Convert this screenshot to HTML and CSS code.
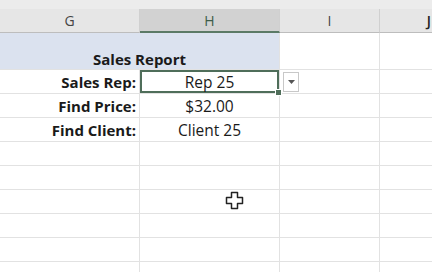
FILE: index.html
```html
<!DOCTYPE html>
<html>
<head>
<meta charset="utf-8">
<link rel="stylesheet" href="styles.css">
</head>
<body>
<div class="sheet">
  <div class="topstrip"></div>
  <div class="grid">
    <div class="hdr">G</div>
    <div class="hdr hdr-sel">H</div>
    <div class="hdr">I</div>
    <div class="hdr hdr-j">J</div>

    <div class="cell title">Sales Report</div>
    <div class="cell tall"></div>
    <div class="cell tall last"></div>

    <div class="cell label">Sales Rep:</div>
    <div class="cell value selected">Rep 25<span class="handle"></span><span class="dd"><svg width="7" height="4" viewBox="0 0 7 4"><path d="M0 0h7L3.5 4z" fill="#555"/></svg></span></div>
    <div class="cell"></div>
    <div class="cell last"></div>

    <div class="cell label">Find Price:</div>
    <div class="cell value">$32.00</div>
    <div class="cell"></div>
    <div class="cell last"></div>

    <div class="cell label">Find Client:</div>
    <div class="cell value">Client 25</div>
    <div class="cell"></div>
    <div class="cell last"></div>

    <div class="cell"></div><div class="cell"></div><div class="cell"></div><div class="cell last"></div>
    <div class="cell"></div><div class="cell"></div><div class="cell"></div><div class="cell last"></div>
    <div class="cell"></div><div class="cell"></div><div class="cell"></div><div class="cell last"></div>
    <div class="cell"></div><div class="cell"></div><div class="cell"></div><div class="cell last"></div>
    <div class="cell"></div><div class="cell"></div><div class="cell"></div><div class="cell last"></div>
    <div class="cell"></div><div class="cell"></div><div class="cell"></div><div class="cell last"></div>
  </div>
  <svg class="cursor" width="20" height="20" viewBox="0 0 20 20">
    <path d="M6.5 1.5h6v5h5v6h-5v5h-6v-5h-5v-6h5z" fill="#fff" stroke="#222" stroke-width="1.5" stroke-linejoin="round"/>
  </svg>
</div>
</body>
</html>
```
FILE: styles.css
```css
html, body {
  margin: 0;
  padding: 0;
  background: #fff;
}
.sheet {
  position: relative;
  width: 432px;
  height: 272px;
  overflow: hidden;
  font-family: "Open Sans", "Noto Sans", sans-serif;
}
.topstrip {
  height: 9px;
  background: #ececec;
}
.grid {
  display: grid;
  grid-template-columns: 140px 140px 100px 52px;
  grid-template-rows: 24px 37px repeat(9, 24px);
}
.hdr {
  box-sizing: border-box;
  background: #e6e6e6;
  border-right: 1px solid #d0d0d0;
  border-bottom: 1px solid #bdbdbd;
  display: flex;
  align-items: center;
  justify-content: center;
  font-size: 14px;
  color: #444;
}
.hdr-sel {
  background: #d2d2d2;
  color: #3d5c49;
  border-bottom: 2px solid #5b7a66;
}
.hdr-j {
  justify-content: flex-end;
  padding-right: 1px;
  border-right: none;
  color: #222;
  font-weight: 600;
}
.cell {
  box-sizing: border-box;
  border-right: 1px solid #e2e2e2;
  border-bottom: 1px solid #e2e2e2;
  display: flex;
  align-items: center;
  font-size: 15px;
  color: #1a1a1a;
  position: relative;
}
.last {
  border-right: none;
}
.title {
  grid-column: span 2;
  background: #dbe2ef;
  justify-content: center;
  align-items: flex-end;
  padding-bottom: 0;
  font-weight: 700;
}
.label {
  justify-content: flex-end;
  padding-right: 3px;
  font-weight: 700;
}
.value {
  justify-content: center;
  font-size: 15.5px;
}
.selected {
  box-shadow: inset 0 0 0 2px #4f6e5a;
}
.handle {
  position: absolute;
  right: -3px;
  bottom: -3px;
  width: 5px;
  height: 5px;
  background: #4f6e5a;
  border: 1px solid #fff;
  z-index: 2;
}
.dd {
  position: absolute;
  left: 143px;
  top: 2px;
  width: 16px;
  height: 20px;
  box-sizing: border-box;
  border: 1px solid #c8c8c8;
  background: #fff;
  display: flex;
  align-items: center;
  justify-content: center;
}
.cursor {
  position: absolute;
  left: 225px;
  top: 191px;
}
```
